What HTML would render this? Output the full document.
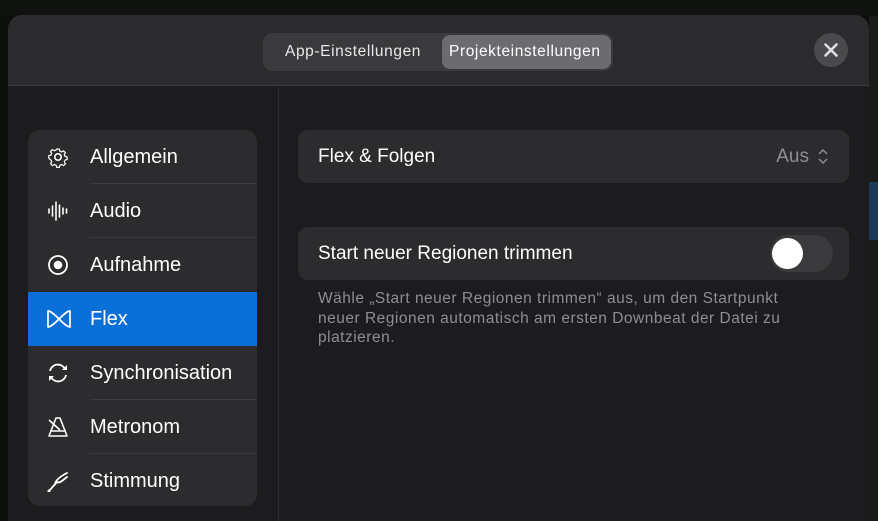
<!DOCTYPE html>
<html><head><meta charset="utf-8"><style>
*{margin:0;padding:0;box-sizing:border-box}
body{width:878px;height:521px;background:#0c0e0c;font-family:"Liberation Sans",sans-serif;position:relative;overflow:hidden;color:#fff}
.top{position:absolute;left:0;top:0;width:878px;height:16px;background:#111311}
.rstrip{position:absolute;left:869px;top:16px;width:9px;height:505px;background:#1a1c1a}
.rblue{position:absolute;left:869px;top:182px;width:9px;height:58px;background:#1b3a55}
.modal{position:absolute;left:8px;top:15px;width:861px;height:506px;background:#1c1c1e;border-radius:14px 14px 0 0;overflow:hidden}
.hdr{position:absolute;left:0;top:0;width:861px;height:71px;background:#2b2b2d;border-bottom:1px solid #3a3a3c}
.seg{position:absolute;left:255px;top:18px;width:350px;height:38px;background:#3a3a3c;border-radius:9px}
.seg span{position:absolute;top:0;line-height:38px;font-size:15.5px;letter-spacing:.6px}
.sel{position:absolute;left:179px;top:2px;width:169px;height:34px;background:#6c6c70;border-radius:8px}
.close{position:absolute;left:806px;top:18px;width:34px;height:34px;border-radius:50%;background:#4a4a4c}
.vline{position:absolute;left:270px;top:72px;width:1px;height:434px;background:#2e2e30}
.side{position:absolute;left:20px;top:115px;width:229px;height:376px;background:#2c2c2e;border-radius:12px;overflow:hidden}
.row{position:absolute;left:0;width:229px;height:54px}
.row .t{position:absolute;left:62px;top:0;line-height:54px;font-size:20px}
.row .sep{position:absolute;left:62px;right:0;bottom:0;height:1px;background:#3d3d40}
.row svg{position:absolute;left:18px;top:16px}
.card{position:absolute;left:290px;width:551px;height:53px;background:#2c2c2e;border-radius:10px}
.card .t{position:absolute;left:20px;line-height:53px;font-size:19px}
.desc{position:absolute;left:310px;top:274px;font-size:15.5px;letter-spacing:.5px;line-height:19.5px;color:#8e8e93;width:520px;white-space:nowrap}
</style></head><body>
<div class="top"></div><div class="rstrip"></div><div class="rblue"></div>
<div class="modal">
<div class="hdr">
<div class="seg"><div class="sel"></div><span style="left:22px;color:#e8e8ea">App-Einstellungen</span><span style="left:186px;color:#fff">Projekteinstellungen</span></div>
<div class="close"><svg width="34" height="34"><path d="M11.5 11.5L22.5 22.5M22.5 11.5L11.5 22.5" stroke="#e0e0e2" stroke-width="2.6" stroke-linecap="round"/></svg></div>
</div>
<div class="vline"></div>
<div class="side">
<div class="row" style="top:0"><svg width="24" height="22" viewBox="0 0 24 22"><circle cx="12" cy="11" r="3.2" fill="none" stroke="#fff" stroke-width="1.6"/><path d="M10.5 2h3l.6 2.4 2 .9 2.2-1.3 2.1 2.1-1.3 2.2.9 2 2.4.6v3l-2.4.6-.9 2 1.3 2.2-2.1 2.1-2.2-1.3-2 .9-.6 2.4h-3l-.6-2.4-2-.9-2.2 1.3-2.1-2.1 1.3-2.2-.9-2L1.5 12.5v-3l2.4-.6.9-2-1.3-2.2 2.1-2.1 2.2 1.3 2-.9z" fill="none" stroke="#fff" stroke-width="1.4" stroke-linejoin="round" transform="translate(12 11) scale(.88) translate(-12 -11)"/></svg><span class="t">Allgemein</span><div class="sep"></div></div>
<div class="row" style="top:54px"><svg width="24" height="22" viewBox="0 0 24 22"><g stroke="#fff" stroke-width="1.6" stroke-linecap="round"><path d="M3 9v4M6.5 6v10M10 2v18M13.5 5v12M17 8v6M20.5 9v4"/></g></svg><span class="t">Audio</span><div class="sep"></div></div>
<div class="row" style="top:108px"><svg width="24" height="22" viewBox="0 0 24 22"><circle cx="12" cy="11" r="9" fill="none" stroke="#fff" stroke-width="1.8"/><circle cx="12" cy="11" r="4.3" fill="#fff"/></svg><span class="t">Aufnahme</span></div>
<div class="row" style="top:162px;background:#0a6fd6"><svg width="26" height="22" viewBox="0 0 26 22"><path d="M2 3 L2 19 C8 19 18 3 24 3 L24 19 C18 19 8 3 2 3Z" fill="none" stroke="#fff" stroke-width="1.7" stroke-linejoin="round"/></svg><span class="t">Flex</span></div>
<div class="row" style="top:216px"><svg width="24" height="22" viewBox="0 0 24 22"><path d="M4 9A8 8 0 0 1 19 7M20 13A8 8 0 0 1 5 15" fill="none" stroke="#fff" stroke-width="1.8"/><path d="M16 8h5V3zM8 14H3v5z" fill="#fff"/></svg><span class="t">Synchronisation</span><div class="sep"></div></div>
<div class="row" style="top:270px"><svg width="24" height="22" viewBox="0 0 24 22"><path d="M10 2h4l7 18H3z" fill="none" stroke="#fff" stroke-width="1.6" stroke-linejoin="round"/><path d="M4 15h16M3 4l11 10" stroke="#fff" stroke-width="1.6"/></svg><span class="t">Metronom</span><div class="sep"></div></div>
<div class="row" style="top:324px"><svg width="24" height="22" viewBox="0 0 24 22"><path d="M3 21L11 12M11 12C14 14 18 9 21 7M9 14C10 9 17 5 21 3" fill="none" stroke="#fff" stroke-width="1.8" stroke-linecap="round"/><circle cx="3" cy="21" r="1.5" fill="#fff"/></svg><span class="t">Stimmung</span></div>
</div>
<div class="card" style="top:115px"><span class="t">Flex &amp; Folgen</span><span style="position:absolute;right:40px;line-height:53px;font-size:19px;color:#8e8e93">Aus</span><svg style="position:absolute;right:20px;top:18px" width="12" height="17"><path d="M2 6l4-4 4 4M2 11l4 4 4-4" fill="none" stroke="#8e8e93" stroke-width="1.5"/></svg></div>
<div class="card" style="top:212px"><span class="t">Start neuer Regionen trimmen</span><div style="position:absolute;left:472px;top:8px;width:63px;height:37px;border-radius:19px;background:#3a3a3c"><div style="position:absolute;left:2px;top:3px;width:31px;height:31px;border-radius:50%;background:#fff"></div></div></div>
<div class="desc">Wähle „Start neuer Regionen trimmen“ aus, um den Startpunkt<br>neuer Regionen automatisch am ersten Downbeat der Datei zu<br>platzieren.</div>
</div>
</body></html>
